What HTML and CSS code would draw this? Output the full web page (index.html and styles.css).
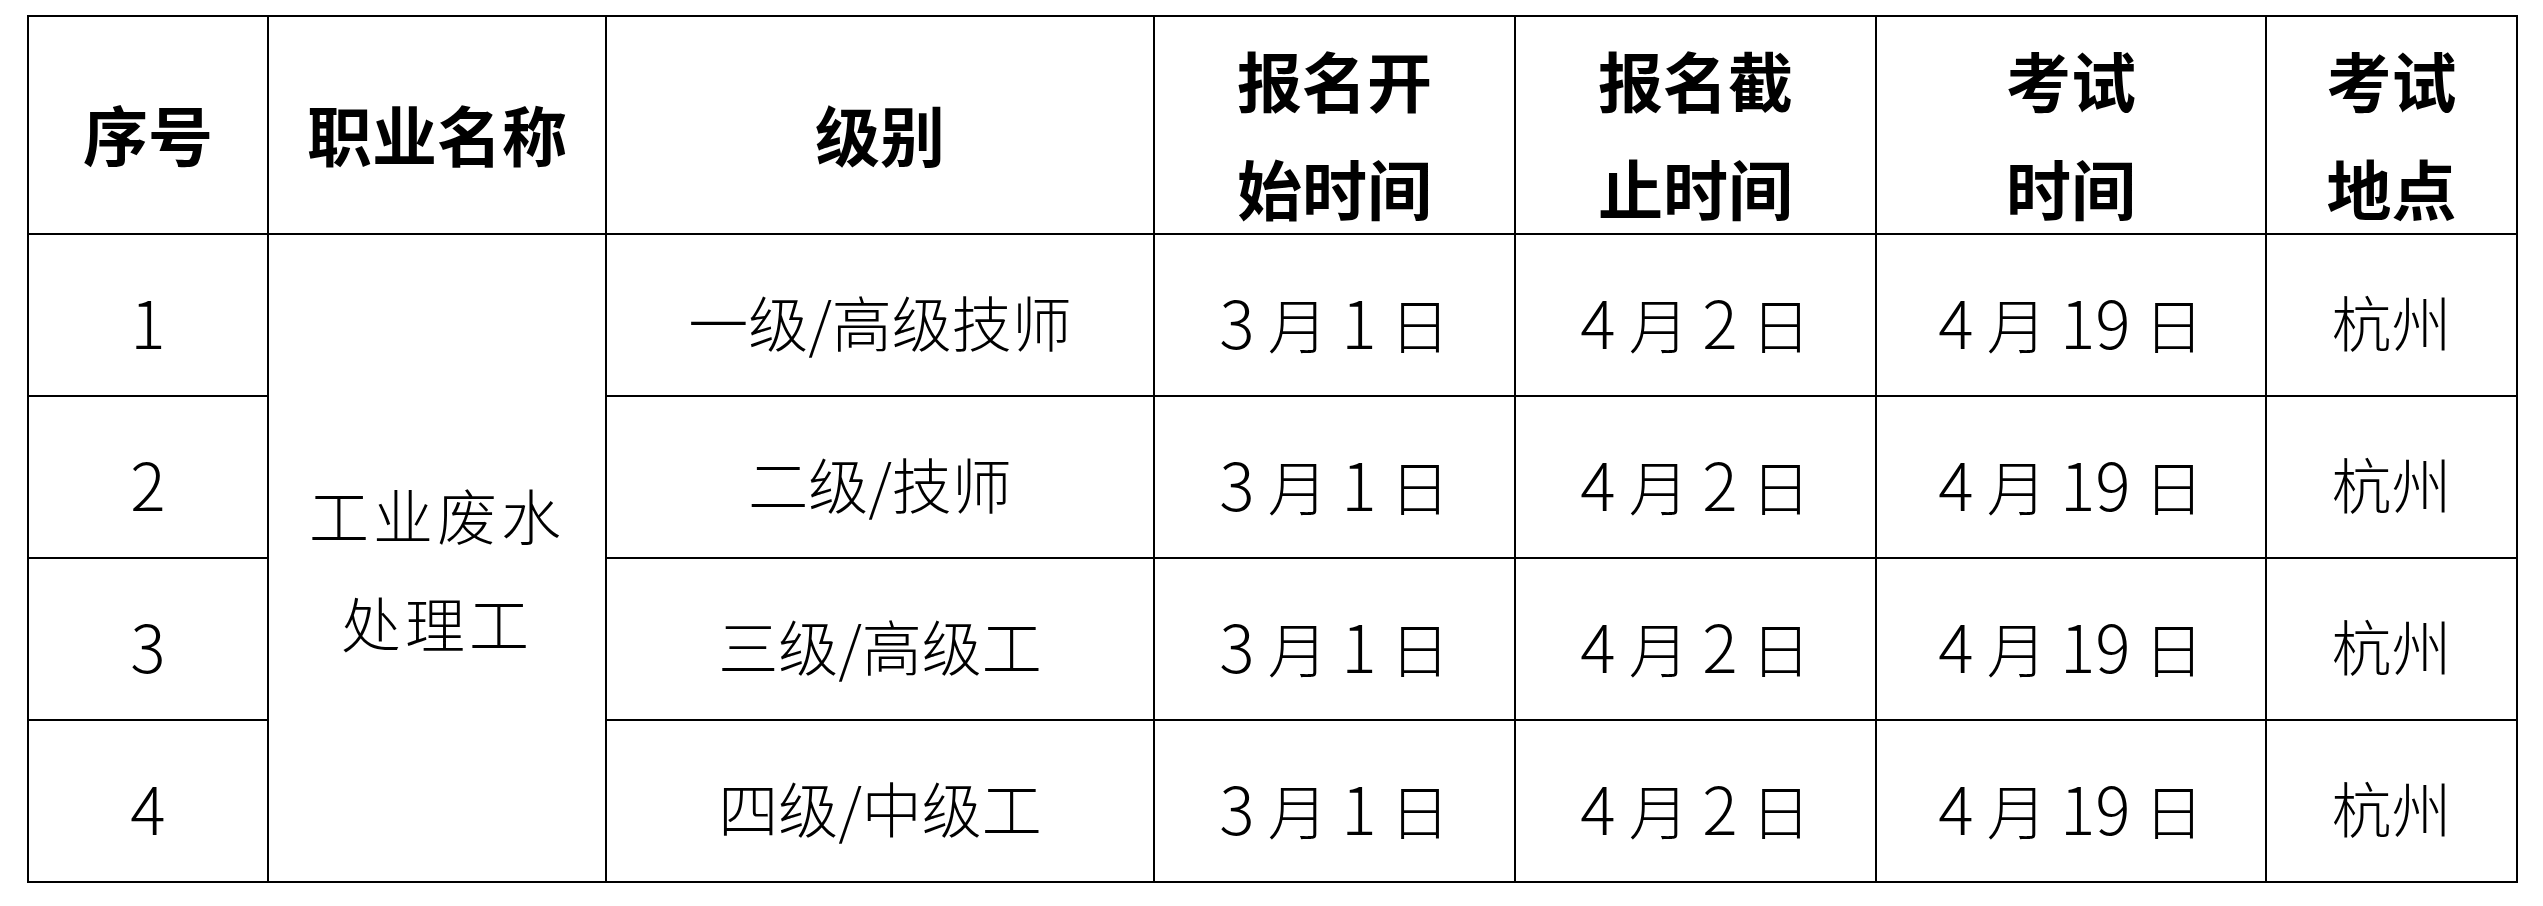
FILE: index.html
```html
<!DOCTYPE html>
<html lang="zh-CN">
<head>
<meta charset="utf-8">
<title>报名安排</title>
<link rel="stylesheet" href="styles.css">
</head>
<body>
<table class="sched">
  <colgroup>
    <col class="c-no">
    <col class="c-trade">
    <col class="c-level">
    <col class="c-start">
    <col class="c-end">
    <col class="c-exam">
    <col class="c-place">
  </colgroup>
  <thead>
    <tr class="head">
      <th><div class="hd">序号</div></th>
      <th><div class="hd">职业名称</div></th>
      <th><div class="hd">级别</div></th>
      <th><div class="hd">报名开<br>始时间</div></th>
      <th><div class="hd">报名截<br>止时间</div></th>
      <th><div class="hd">考试<br>时间</div></th>
      <th><div class="hd">考试<br>地点</div></th>
    </tr>
  </thead>
  <tbody>
    <tr class="row">
      <td><span class="num">1</span></td>
      <td class="trade" rowspan="4"><div class="trade-in">工业废水<br>处理工</div></td>
      <td>一级/高级技师</td>
      <td><span class="num">3</span> 月 <span class="num">1</span> 日</td>
      <td><span class="num">4</span> 月 <span class="num">2</span> 日</td>
      <td><span class="num">4</span> 月 <span class="num">19</span> 日</td>
      <td>杭州</td>
    </tr>
    <tr class="row">
      <td><span class="num">2</span></td>
      <td>二级/技师</td>
      <td><span class="num">3</span> 月 <span class="num">1</span> 日</td>
      <td><span class="num">4</span> 月 <span class="num">2</span> 日</td>
      <td><span class="num">4</span> 月 <span class="num">19</span> 日</td>
      <td>杭州</td>
    </tr>
    <tr class="row">
      <td><span class="num">3</span></td>
      <td>三级/高级工</td>
      <td><span class="num">3</span> 月 <span class="num">1</span> 日</td>
      <td><span class="num">4</span> 月 <span class="num">2</span> 日</td>
      <td><span class="num">4</span> 月 <span class="num">19</span> 日</td>
      <td>杭州</td>
    </tr>
    <tr class="row last">
      <td><span class="num">4</span></td>
      <td>四级/中级工</td>
      <td><span class="num">3</span> 月 <span class="num">1</span> 日</td>
      <td><span class="num">4</span> 月 <span class="num">2</span> 日</td>
      <td><span class="num">4</span> 月 <span class="num">19</span> 日</td>
      <td>杭州</td>
    </tr>
  </tbody>
</table>
</body>
</html>
```

FILE: styles.css
```css
html, body {
  margin: 0;
  background: #ffffff;
}

body {
  padding: 15px 0 0 27px;
  font-family: "Noto Sans CJK SC", "Noto Sans", sans-serif;
  color: #000000;
}

.sched {
  border-collapse: collapse;
  table-layout: fixed;
  width: 2489px;
}

.c-no { width: 240px; }
.c-trade { width: 338px; }
.c-level { width: 548px; }
.c-start { width: 361px; }
.c-end { width: 361px; }
.c-exam { width: 390px; }
.c-place { width: 251px; }

.sched th,
.sched td {
  border: 2px solid #000000;
  padding: 0;
  text-align: center;
  vertical-align: middle;
}

.head {
  height: 216px;
}

.sched th {
  font-size: 65px;
  font-weight: 700;
  line-height: 108px;
}

.hd {
  padding-top: 8px;
  margin-bottom: -8px;
}

.row {
  height: 162px;
}

.sched td {
  font-size: 60px;
  font-weight: 300;
  line-height: 80px;
  padding-top: 12px;
  word-spacing: 0;
}

.num {
  font-size: 66px;
  font-weight: 300;
}

.sched td.trade {
  line-height: 108px;
  letter-spacing: 4px;
  padding-top: 0;
}

.trade-in {
  padding-top: 10px;
  margin-bottom: -10px;
}
```
